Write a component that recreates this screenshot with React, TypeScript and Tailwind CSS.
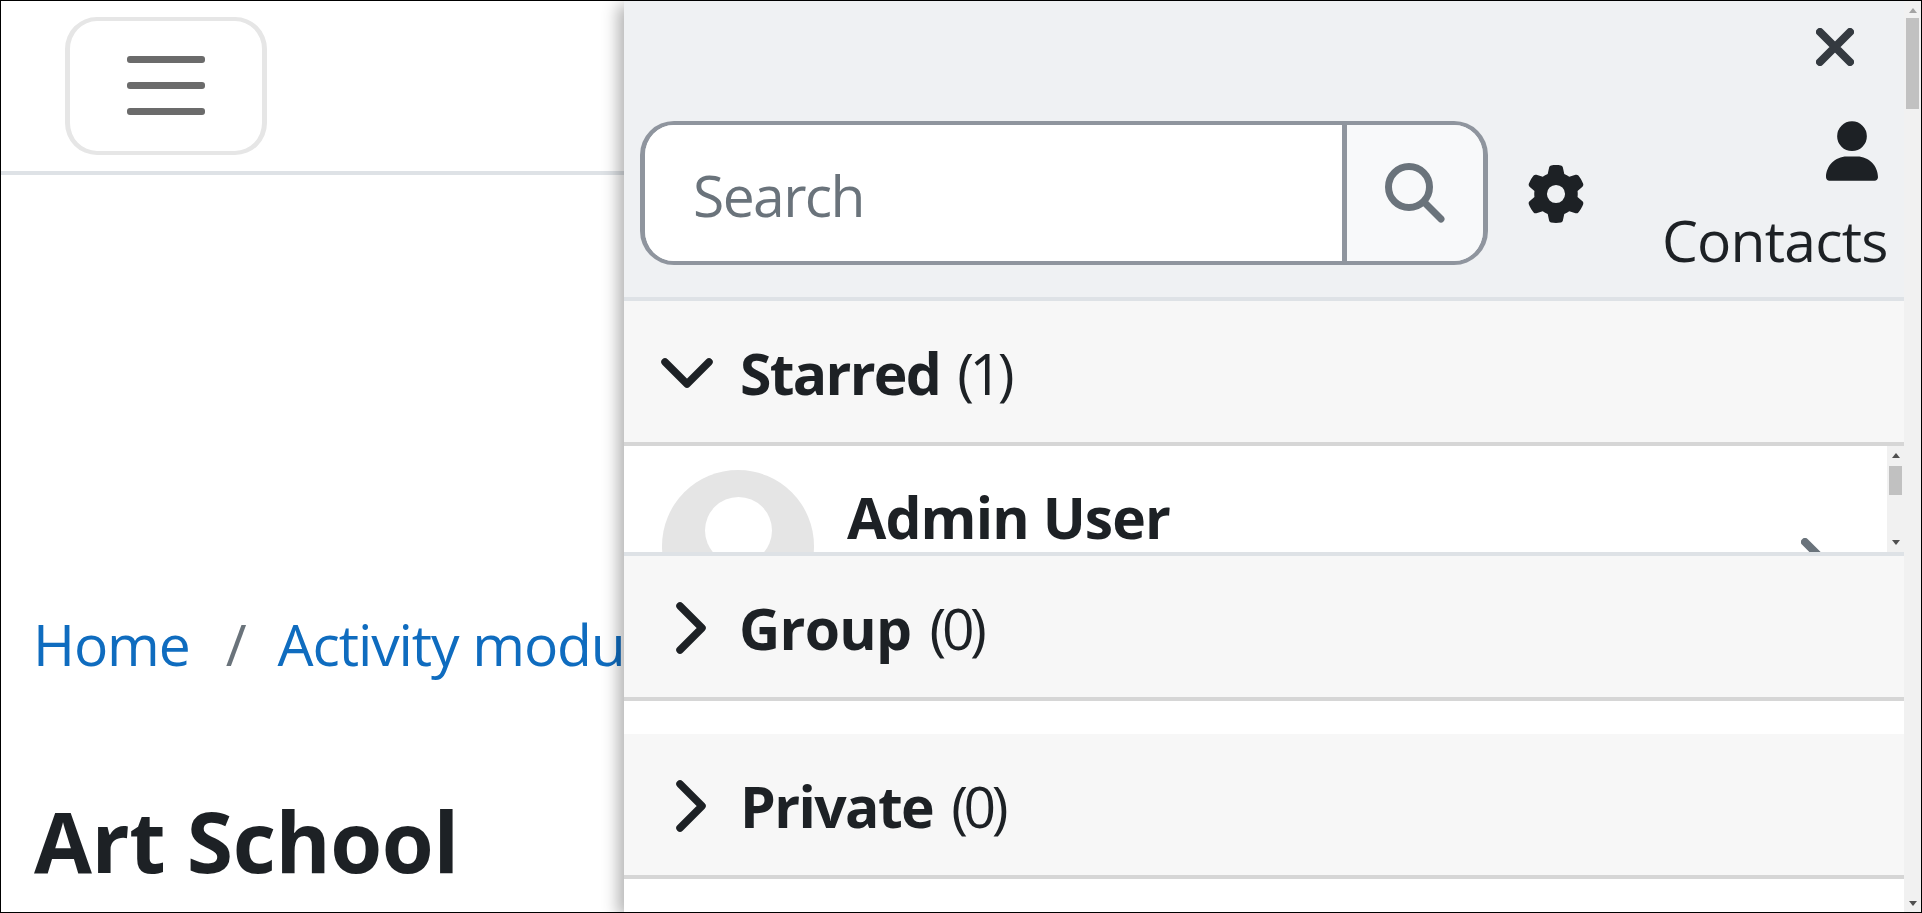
import { FaGear, FaUser } from 'react-icons/fa6'

function ChevronRight() {
  return (
    <svg width="30" height="52" viewBox="0 0 30 52" className="shrink-0">
      <polyline points="4,4 26,26 4,48" fill="none" stroke="#1d2125" strokeWidth="7.5" strokeLinecap="round" strokeLinejoin="round" />
    </svg>
  )
}

function ChevronDown() {
  return (
    <svg width="52" height="30" viewBox="0 0 52 30" className="shrink-0">
      <polyline points="4,4 26,26 48,4" fill="none" stroke="#1d2125" strokeWidth="7.5" strokeLinecap="round" strokeLinejoin="round" />
    </svg>
  )
}

function SearchGlyph() {
  return (
    <svg width="60" height="60" viewBox="0 0 60 60">
      <circle cx="24" cy="24" r="20.5" fill="none" stroke="#6a737b" strokeWidth="7" />
      <line x1="39" y1="39" x2="56" y2="56" stroke="#6a737b" strokeWidth="7" strokeLinecap="round" />
    </svg>
  )
}

function CloseGlyph() {
  return (
    <svg width="38" height="38" viewBox="0 0 38 38">
      <path d="M4 4 L34 34 M34 4 L4 34" fill="none" stroke="#343a40" strokeWidth="8" strokeLinecap="round" />
    </svg>
  )
}

function ScrollTriangle({ down }: { down?: boolean }) {
  return (
    <svg width="8" height="5" viewBox="0 0 8 5" className={down ? 'rotate-180' : ''}>
      <polygon points="4,0 8,5 0,5" fill="currentColor" />
    </svg>
  )
}

function Section({ title, count, titleClass }: { title: string; count: number; titleClass: string }) {
  return (
    <div className="h-[145px] shrink-0 flex items-center bg-[#f7f7f7] border-b-4 border-[#d6d6d6]">
      <div className="w-[115px] shrink-0 flex justify-end pr-[33px] pt-[2px]">
        <ChevronRight />
      </div>
      <span className={`font-bold pt-[2px] ${titleClass}`}>{title}</span>
      <span className="ml-[18px] pt-[2px] tracking-[-4.4px]">({count})</span>
    </div>
  )
}

export default function App() {
  return (
    <div className="relative w-[1922px] h-[913px] overflow-hidden bg-white border border-black font-['Open_Sans','Noto_Sans',sans-serif] text-[57px] leading-[68px] text-[#1d2125]">
      {/* page behind the drawer */}
      <header className="h-[174px] border-b-4 border-[#dee2e6] pt-[16px] pl-[64px]">
        <div className="w-[202px] h-[138px] border-y-4 border-x-[5px] border-[#e6e6e6] rounded-[32px] pl-[57px] pt-[35px] flex flex-col gap-[19px]">
          <div className="w-[78px] h-[7px] rounded-[3px] bg-[#6b6b6b]" />
          <div className="w-[78px] h-[7px] rounded-[3px] bg-[#6b6b6b]" />
          <div className="w-[78px] h-[7px] rounded-[3px] bg-[#6b6b6b]" />
        </div>
      </header>
      <nav className="mt-[435px] pl-[32px] flex items-center whitespace-nowrap tracking-[-1.1px] text-[#0f6cbf]">
        <span>Home</span>
        <span className="ml-[36px] mr-[32px] text-[#6a737b]">/</span>
        <span>Activity modules</span>
      </nav>
      <h1 className="mt-[113px] pl-[33px] text-[84px] leading-[100px] font-bold tracking-[-0.4px]">Art School</h1>

      {/* messaging drawer */}
      <aside className="absolute top-0 right-0 bottom-0 left-[623px] flex bg-white shadow-[-6px_4px_15px_rgba(0,0,0,0.3)]">
        <div className="flex-1 flex flex-col min-w-0">
          <div className="h-[300px] bg-[#eff1f3] border-b-4 border-[#dee2e6] shrink-0">
            <div className="h-[120px] flex justify-end pt-[27px] pr-[50px]">
              <CloseGlyph />
            </div>
            <div className="flex items-start pl-[16px]">
              <div className="w-[848px] h-[144px] flex border-y-4 border-x-[5px] border-[#8f959e] rounded-[34px] overflow-hidden">
                <div className="w-[702px] pl-[48px] pt-[4px] flex items-center text-[#6a737b] tracking-[-1.6px] bg-white border-r-[5px] border-[#8f959e]">Search</div>
                <div className="flex-1 flex items-center justify-center bg-[#f8f9fa]">
                  <SearchGlyph />
                </div>
              </div>
              <div className="ml-[39px] mt-[44px]">
                <FaGear className="w-[58px] h-[58px]" />
              </div>
              <div className="ml-[77px] flex flex-col">
                <div className="pl-[164px]">
                  <FaUser className="w-[52px] h-[60px]" />
                </div>
                <span className="mt-[25px] tracking-[-0.8px] whitespace-nowrap">Contacts</span>
              </div>
            </div>
          </div>

          <div className="h-[145px] flex items-center bg-[#f7f7f7] border-b-4 border-[#d6d6d6] shrink-0">
            <div className="w-[116px] shrink-0 pl-[37px] pt-[2px]">
              <ChevronDown />
            </div>
            <span className="font-bold pt-[3px] tracking-[-1.7px]">Starred</span>
            <span className="ml-[17px] pt-[3px] tracking-[-4.4px]">(1)</span>
          </div>

          <div className="h-[110px] flex border-b-4 border-[#dee2e6] overflow-hidden shrink-0">
            <div className="flex-1 flex items-start pl-[38px] pt-[24px] min-w-0">
              <div className="w-[152px] h-[152px] rounded-full bg-[#e5e5e5] shrink-0 flex justify-center pt-[27px]">
                <div className="w-[67px] h-[67px] rounded-full bg-white" />
              </div>
              <span className="ml-[33px] mt-[13px] font-bold tracking-[-0.9px] whitespace-nowrap">Admin User</span>
              <svg width="30" height="30" viewBox="0 0 30 30" className="ml-[631px] mt-[68px] shrink-0">
                <polyline points="4,4 24,24" fill="none" stroke="#6a737b" strokeWidth="8" strokeLinecap="round" />
              </svg>
            </div>
            <div className="w-[17px] shrink-0 bg-[#f1f1f1] flex flex-col items-center text-[#505050] pt-[7px] pb-[7px]">
              <ScrollTriangle />
              <div className="w-[13px] h-[29px] bg-[#c1c1c1] mt-[8px]" />
              <div className="mt-auto">
                <ScrollTriangle down />
              </div>
            </div>
          </div>

          <Section title="Group" count={0} titleClass="tracking-[-0.7px]" />
          <div className="h-[33px] shrink-0" />
          <Section title="Private" count={0} titleClass="ml-[1px] tracking-[-1.6px]" />
        </div>

        <div className="w-[17px] shrink-0 bg-[#f1f1f1] flex flex-col items-center pt-[7px] pb-[6px] text-[#a3a3a3]">
          <ScrollTriangle />
          <div className="w-[13px] h-[91px] bg-[#c1c1c1] mt-[5px]" />
          <div className="mt-auto text-[#505050]">
            <ScrollTriangle down />
          </div>
        </div>
      </aside>
    </div>
  )
}
